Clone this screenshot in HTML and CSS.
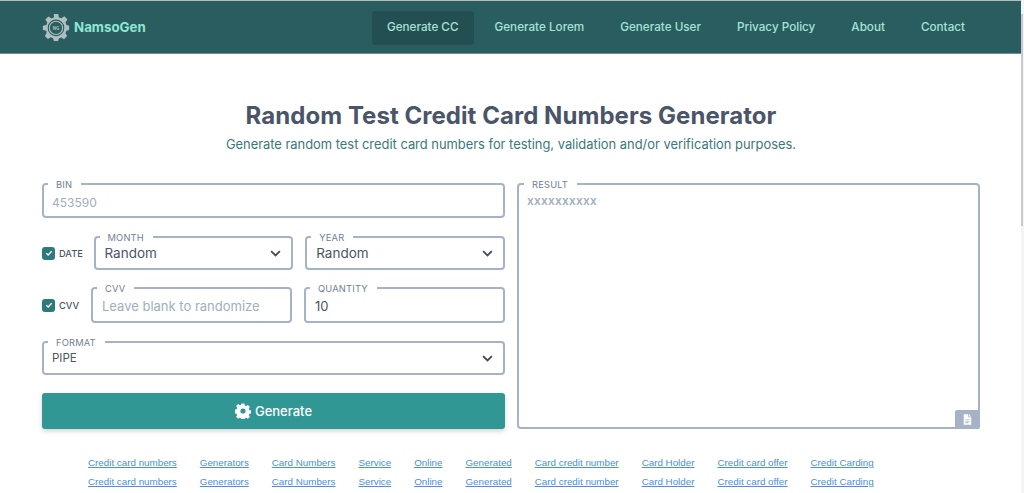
FILE: index.html
```html
<!DOCTYPE html>
<html lang="en">
<head>
<meta charset="utf-8">
<title>NamsoGen</title>
<link rel="stylesheet" href="styles.css">
</head>
<body>
<div class="page">
  <header class="topbar">
    <a class="brand" href="#">
      <svg class="brand-icon" viewBox="0 0 32 32" width="28" height="28" aria-hidden="true">
        <g fill="#aebfc0">
          <path d="M13.5 1h5l.8 4 2.8 1.1 3.4-2.3 3.6 3.6-2.3 3.4L28 13.7l3 .8v5l-3 .8-1.2 2.9 1.9 3.2-3.5 3.5-3.3-2-2.7 1.1-.7 2.9h-5l-.8-3-2.7-1.1-3.2 2-3.6-3.5 2-3.2L5 20.3l-4-.8v-5l4-.8 1.1-2.8-2.3-3.4 3.6-3.6 3.4 2.3L13.6 5z"/>
        </g>
        <circle cx="16" cy="17" r="9.5" fill="#2a5d60"/>
        <circle cx="16" cy="17" r="7.6" fill="none" stroke="#aebfc0" stroke-width="1.3"/>
        <text x="16" y="19" text-anchor="middle" class="brand-mark">NG</text>
      </svg>
      <span>NamsoGen</span>
    </a>
    <nav class="nav">
      <a class="nav-link active" href="#">Generate CC</a>
      <a class="nav-link" href="#">Generate Lorem</a>
      <a class="nav-link" href="#">Generate User</a>
      <a class="nav-link" href="#">Privacy Policy</a>
      <a class="nav-link" href="#">About</a>
      <a class="nav-link" href="#">Contact</a>
    </nav>
  </header>

  <main class="content">
    <h1 class="title">Random Test Credit Card Numbers Generator</h1>
    <p class="subtitle">Generate random test credit card numbers for testing, validation and/or verification purposes.</p>

    <div class="columns">
      <div class="form">
        <fieldset class="field wide">
          <legend>BIN</legend>
          <input class="control num" type="text" placeholder="453590">
        </fieldset>

        <div class="row date-row">
          <label class="check date-check"><span class="box"><svg viewBox="0 0 12 12" width="8" height="8"><path d="M2 6.4 4.8 9 10 3.4" fill="none" stroke="#fff" stroke-width="2"/></svg></span><span>DATE</span></label>
          <fieldset class="field short grow">
            <legend>MONTH</legend>
            <div class="select"><span>Random</span><svg viewBox="0 0 12 8" width="11" height="7"><path d="M1 1.2 6 6.2l5-5" fill="none" stroke="#3f4a5a" stroke-width="2"/></svg></div>
          </fieldset>
          <fieldset class="field short grow">
            <legend>YEAR</legend>
            <div class="select"><span>Random</span><svg viewBox="0 0 12 8" width="11" height="7"><path d="M1 1.2 6 6.2l5-5" fill="none" stroke="#3f4a5a" stroke-width="2"/></svg></div>
          </fieldset>
        </div>

        <div class="row cvv-row">
          <label class="check cvv-check"><span class="box"><svg viewBox="0 0 12 12" width="8" height="8"><path d="M2 6.4 4.8 9 10 3.4" fill="none" stroke="#fff" stroke-width="2"/></svg></span><span>CVV</span></label>
          <fieldset class="field tall grow">
            <legend>CVV</legend>
            <input class="control" type="text" placeholder="Leave blank to randomize">
          </fieldset>
          <fieldset class="field tall grow">
            <legend>QUANTITY</legend>
            <input class="control" type="text" value="10">
          </fieldset>
        </div>

        <fieldset class="field short wide">
          <legend>FORMAT</legend>
          <div class="select caps"><span>PIPE</span><svg viewBox="0 0 12 8" width="11" height="7"><path d="M1 1.2 6 6.2l5-5" fill="none" stroke="#3f4a5a" stroke-width="2"/></svg></div>
        </fieldset>

        <button class="generate" type="button">
          <svg viewBox="0 0 16 16" width="16" height="16"><path fill="#fff" fill-rule="evenodd" d="M6.6.5h2.8l.4 2 1.3.6 1.8-1.1 2 2-1.1 1.8.6 1.3 2 .4v2.8l-2 .4-.6 1.3 1.1 1.8-2 2-1.8-1.1-1.3.6-.4 2H6.600l-.4-2-1.300-.6-1.800 1.100-2-2 1.100-1.800-.6-1.300-2-.4V6.600l2-.4.6-1.300L1.100 3.100l2-2 1.800 1.100 1.300-.6zM8 5.400a2.600 2.600 0 1 0 0 5.200 2.600 2.600 0 0 0 0-5.200z"/></svg>
          <span>Generate</span>
        </button>
      </div>

      <fieldset class="field result">
        <legend>RESULT</legend>
        <div class="result-text">xxxxxxxxxx</div>
        <span class="copy"><svg viewBox="0 0 12 14" width="9" height="11"><path fill="#fff" fill-rule="evenodd" d="M1 0h6v4h4v10H1zM8 0l3 3H8zM3 7v1h6V7zm0 2.500v1h6v-1zM3 12h4v-1H3z"/></svg></span>
      </fieldset>
    </div>

    <div class="links">
      <div class="link-row">
        <a href="#">Credit card numbers</a><a href="#">Generators</a><a href="#">Card Numbers</a><a href="#">Service</a><a href="#">Online</a><a href="#">Generated</a><a href="#">Card credit number</a><a href="#">Card Holder</a><a href="#">Credit card offer</a><a href="#">Credit Carding</a>
      </div>
      <div class="link-row">
        <a href="#">Credit card numbers</a><a href="#">Generators</a><a href="#">Card Numbers</a><a href="#">Service</a><a href="#">Online</a><a href="#">Generated</a><a href="#">Card credit number</a><a href="#">Card Holder</a><a href="#">Credit card offer</a><a href="#">Credit Carding</a>
      </div>
    </div>
  </main>
</div>
<div class="scrollbar"><div class="thumb"></div></div>
</body>
</html>
```

FILE: styles.css
```css
* { box-sizing: border-box; }
html, body { height: 100%; }
body {
  margin: 0;
  display: flex;
  height: 493px;
  overflow: hidden;
  background: #fff;
  font-family: "Inter", "Liberation Sans", sans-serif;
  color: #4a5568;
}
.page { width: 1021px; flex: none; }
.scrollbar { flex: 1; background: #f3f4f6; padding-top: 14px; }
.thumb { height: 212px; background: #c8cbce; margin-right: 1px; }

.topbar {
  height: 54px;
  border-top: 1px solid #b6bcbc;
  border-bottom: 1px solid #6f8f90;
  background: #2a5d60;
  display: flex;
  align-items: center;
  justify-content: space-between;
  padding: 0 41px 0 42px;
}
.brand {
  display: flex;
  align-items: center;
  gap: 4px;
  color: #8fe6d3;
  font-size: 13.300px;
  font-weight: 700;
  text-decoration: none;
}
.brand-mark { font-size: 5px; font-weight: 700; fill: #aebfc0; }
.nav { display: flex; gap: 6px; }
.nav-link {
  padding: 0 15px;
  height: 34px;
  margin-top: 1px;
  line-height: 32px;
  border-radius: 3px;
  color: #a5e3d6;
  font-size: 11.700px;
  font-weight: 500;
  text-decoration: none;
}
.nav-link.active { background: #234f52; }

.content { padding: 0 41px 0 42px; }
.title {
  margin: 47px 0 0;
  text-align: center;
  font-size: 24px;
  line-height: 30px;
  font-weight: 700;
  letter-spacing: .05px;
  color: #4a5568;
}
.subtitle {
  margin: 4px 0 0;
  text-align: center;
  font-size: 12.900px;
  line-height: 20px;
  color: #38797d;
}

.columns { display: grid; grid-template-columns: 463px 463px; gap: 12px; margin-top: 24px; }
.form { display: flex; flex-direction: column; gap: 14px; }
.field {
  margin: 0;
  padding: 0 9px;
  min-width: 0;
  border: 2px solid #a6b3c6;
  border-radius: 4px;
  height: 39px;
  background: #fff;
}
.field.wide { padding-left: 8px; }
.field.short { height: 38px; }
.field.tall { height: 40px; }
.field legend {
  margin-left: -5px;
  padding: 0 9px 0 8px;
  font-size: 9.300px;
  line-height: 10px;
  letter-spacing: .2px;
  color: #718096;
  transform: translateY(1px);
}
.field.wide legend { margin-left: -4px; }
.control {
  display: block;
  width: 100%;
  height: 26px;
  border: 0;
  padding: 0;
  outline: 0;
  background: transparent;
  font: 400 13px "Inter", "Liberation Sans", sans-serif;
  color: #4a5568;
}
.control.num { font-size: 12px; }
.control::placeholder { color: #a0aec0; opacity: 1; }
.select {
  display: flex;
  align-items: center;
  justify-content: space-between;
  height: 22px;
  padding-right: 1px;
  font-size: 13.500px;
  color: #4a5568;
}
.select.caps { font-size: 11.500px; }
.row { display: flex; align-items: center; gap: 12px; }
.cvv-row { margin-top: -1px; }
.grow { flex: 1 1 0; }
.check {
  display: flex;
  align-items: center;
  gap: 4px;
  padding-top: 4px;
  font-size: 9.300px;
  font-weight: 500;
  color: #4a5568;
  white-space: nowrap;
}
.date-check { width: 39.500px; }
.cvv-check { width: 37px; }
.box {
  flex: none;
  width: 13px;
  height: 13px;
  border-radius: 3px;
  background: #2c7a7b;
  display: flex;
  align-items: center;
  justify-content: center;
}
.generate {
  height: 36px;
  margin-top: 4px;
  border: 0;
  border-radius: 3px;
  background: #319795;
  box-shadow: 0 2px 5px rgba(0,0,0,.18);
  color: #fff;
  font: 500 13px "Inter", "Liberation Sans", sans-serif;
  display: flex;
  align-items: center;
  justify-content: center;
  gap: 4px;
}
.result { position: relative; height: 250px; padding: 4px 8px 0; }
.result legend { margin-left: -3px; }
.result-text {
  font-size: 11.800px;
  font-weight: 600;
  line-height: 16px;
  color: #a0aec0;
  letter-spacing: .3px;
}
.copy {
  position: absolute;
  right: -2px;
  bottom: -2px;
  width: 25px;
  height: 19px;
  background: #a6b3c6;
  border-radius: 2px;
  display: flex;
  align-items: center;
  justify-content: center;
}
.links { margin-top: 24px; padding-left: 46px; }
.link-row {
  display: flex;
  gap: 23px;
  height: 19px;
  font: 9.800px/19px "Liberation Sans", Arial, sans-serif;
}
.link-row a { color: #4a90dc; }
```
